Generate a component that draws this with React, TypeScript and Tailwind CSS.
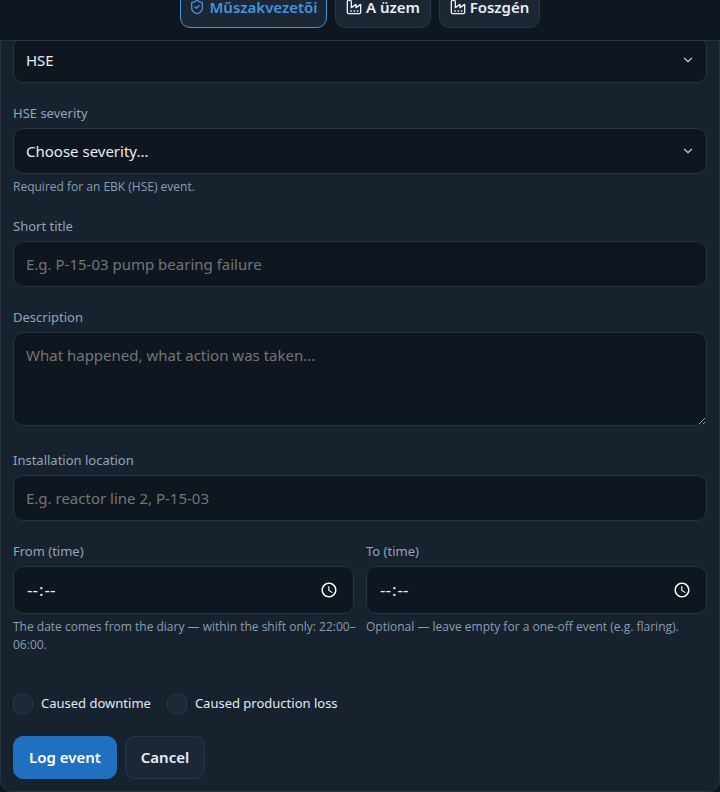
import type { ReactNode } from "react";
import { ChevronDown, ShieldCheck } from "lucide-react";

const field =
  "block w-full rounded-[10px] border border-[#26343f] bg-[#0e161f] px-3 text-[15px] text-[#e8eef5] placeholder:text-[#757575] outline-none focus:border-[#4493dc]";

function Factory() {
  return (
    <svg
      width="16"
      height="16"
      viewBox="0 0 24 24"
      fill="none"
      stroke="currentColor"
      strokeWidth="2"
      strokeLinecap="round"
      strokeLinejoin="round"
      aria-hidden="true"
    >
      <path d="M2 20a2 2 0 0 0 2 2h16a2 2 0 0 0 2-2V8l-7 5V8l-7 5V4a2 2 0 0 0-2-2H4a2 2 0 0 0-2 2Z" />
      <path d="M17 18h1M12 18h1M7 18h1" />
    </svg>
  );
}

function Field({ id, label, hint, children }: { id: string; label: string; hint?: string; children: ReactNode }) {
  return (
    <div className="flex flex-col">
      <label htmlFor={id} className="mb-1 text-[13px] leading-[21px] text-[#93a5b8]">
        {label}
      </label>
      {children}
      {hint && <p className="mt-1 -mr-2 font-['Open_Sans',sans-serif] text-[12px] leading-[18px] text-[#8b9db0]">{hint}</p>}
    </div>
  );
}

function Select({ id, label, options }: { id: string; label?: string; options: string[] }) {
  return (
    <div className="relative">
      <select id={id} aria-label={label} className={`${field} h-[46px] appearance-none pr-10`}>
        {options.map((o) => (
          <option key={o}>{o}</option>
        ))}
      </select>
      <ChevronDown size={14} className="pointer-events-none absolute top-4 right-3 text-[#c3cad2]" />
    </div>
  );
}

function TimeInput({ id }: { id: string }) {
  return (
    <input
      id={id}
      type="time"
      className={`${field} h-12 text-[17px]! [&::-webkit-datetime-edit-ampm-field]:hidden`}
    />
  );
}

function Check({ label }: { label: string }) {
  return (
    <label className="flex items-center gap-2 text-[13px] leading-[21px] text-[#e3eaf2]">
      <input
        type="checkbox"
        className="size-5 shrink-0 appearance-none rounded-[7px] border border-[#293744] bg-[#1c2836] checked:bg-[#2070c0]"
      />
      {label}
    </label>
  );
}

const button = "flex h-[43px] shrink-0 items-center justify-center rounded-[10px] border text-[15px] font-semibold";
const quiet = "border-[#293744] bg-[#1b2735] text-[#e8eef5]";

export default function App() {
  return (
    <div className="min-h-screen bg-[#0e161f] font-['Noto_Sans','Open_Sans',sans-serif] scheme-dark">
      <header className="relative z-10 flex h-[41px] items-end justify-center gap-2 border-b border-[#26343f] bg-[#0e161f] pb-3">
        <button type="button" className={`${button} w-[147px] gap-1 border-[#4493dc] bg-[#1b2735] leading-3 text-[#4493dc]`}>
          <ShieldCheck size={16} />
          Műszakvezetői
        </button>
        <button type="button" className={`${button} ${quiet} w-24 gap-1 leading-3`}>
          <Factory />
          A üzem
        </button>
        <button type="button" className={`${button} ${quiet} w-[101px] gap-1 leading-3`}>
          <Factory />
          Foszgén
        </button>
      </header>

      <form className="-mt-5 rounded-xl border border-[#26343f] bg-[#16222e] px-3 pt-[15px] pb-3">
        <div className="flex flex-col gap-5">
          <Select id="category" label="Category" options={["HSE"]} />
          <Field id="severity" label="HSE severity" hint="Required for an EBK (HSE) event.">
            <Select id="severity" options={["Choose severity..."]} />
          </Field>
          <Field id="title" label="Short title">
            <input id="title" type="text" placeholder="E.g. P-15-03 pump bearing failure" className={`${field} h-[46px]`} />
          </Field>
          <Field id="description" label="Description">
            <textarea
              id="description"
              placeholder="What happened, what action was taken..."
              className={`${field} mb-1 h-[94px] resize-y py-3 leading-[21px]`}
            />
          </Field>
          <Field id="location" label="Installation location">
            <input id="location" type="text" placeholder="E.g. reactor line 2, P-15-03" className={`${field} h-[46px]`} />
          </Field>
          <div className="grid grid-cols-2 gap-3">
            <Field id="from" label="From (time)" hint="The date comes from the diary — within the shift only: 22:00–06:00.">
              <TimeInput id="from" />
            </Field>
            <Field id="to" label="To (time)" hint="Optional — leave empty for a one-off event (e.g. flaring).">
              <TimeInput id="to" />
            </Field>
          </div>
        </div>
        <div className="mt-[39px] flex flex-wrap gap-4">
          <Check label="Caused downtime" />
          <Check label="Caused production loss" />
        </div>
        <div className="mt-[22px] flex gap-2">
          <button type="submit" className={`${button} w-[104px] border-[#2070c0] bg-[#2070c0] text-white`}>
            Log event
          </button>
          <button type="button" className={`${button} ${quiet} w-20`}>
            Cancel
          </button>
        </div>
      </form>
    </div>
  );
}
